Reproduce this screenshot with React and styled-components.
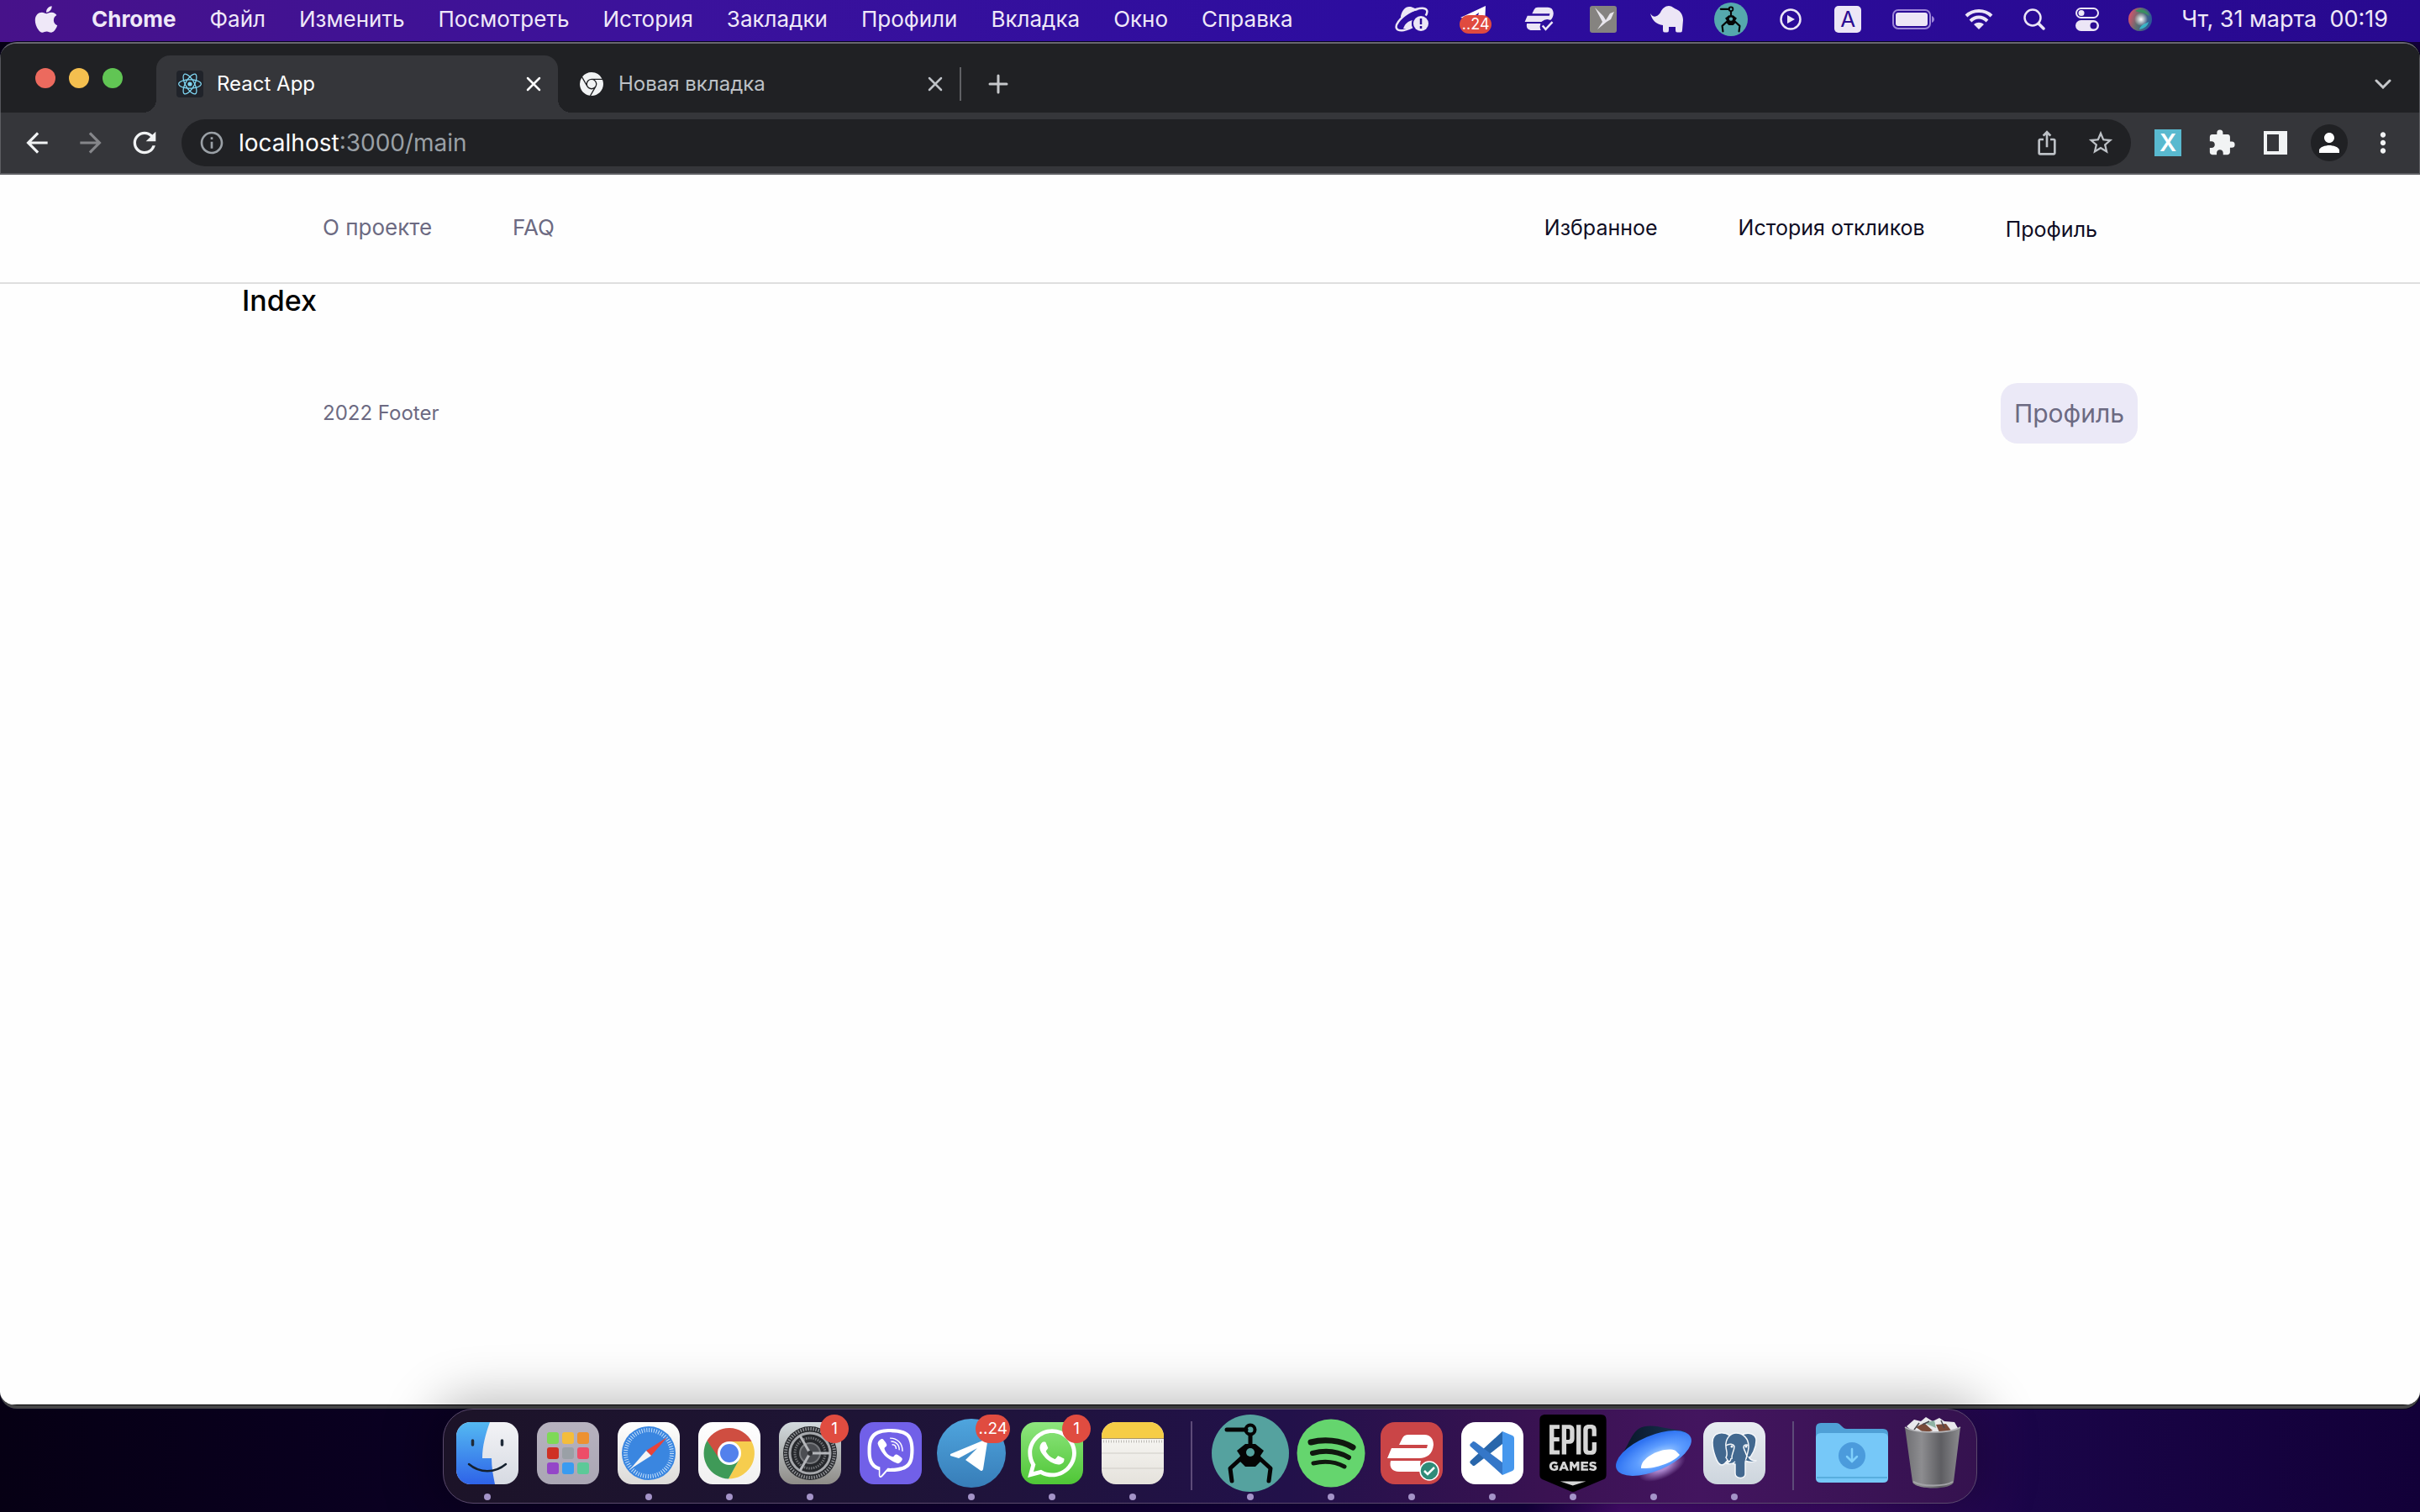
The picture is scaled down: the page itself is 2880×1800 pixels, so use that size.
import React from 'react'
import styled, { createGlobalStyle, css } from 'styled-components'
import { FaApple, FaWhatsapp } from 'react-icons/fa'
import { MdExtension, MdIosShare, MdStarBorder, MdInfoOutline, MdArrowBack, MdArrowForward, MdRefresh, MdPerson, MdMoreVert } from 'react-icons/md'
import { SiReact, SiGooglechrome, SiViber, SiEpicgames } from 'react-icons/si'

const GlobalStyle = createGlobalStyle`
    * {
        box-sizing: border-box;
        margin: 0;
        padding: 0;
    }
    body {
        font-family: Inter, 'Liberation Sans', sans-serif;
        background: #0b0024;
    }
    button {
        border: none;
        background: none;
        font: inherit;
        color: inherit;
        cursor: pointer;
    }
    a {
        color: inherit;
        text-decoration: none;
    }
    svg {
        display: block;
        flex: none;
    }
`

const Desktop = styled.div`
    min-height: 100vh;
    display: flex;
    flex-direction: column;
    background: linear-gradient(90deg, #060014 0%, #0b0024 20%, #120036 45%, #150040 63%, #480c72 67%, #3b0a66 76%, #1a0548 84%, #120038 100%);
`

const MenuBar = styled.header`
    height: 50px;
    padding: 0 38px 4px 41px;
    display: flex;
    align-items: center;
    justify-content: space-between;
    background: linear-gradient(90deg, #47128a 0%, #3b129c 28%, #2d0d9f 56%, #28098f 100%);
    color: #efe8f8;
    font-size: 26px;
    line-height: 32px;
`

const MenuList = styled.nav`
    display: flex;
    align-items: center;
    gap: 40px;
`

const MenuButton = styled.button`
    white-space: nowrap;
    font-weight: ${props => props.$bold ? 700 : 400};
`

const StatusList = styled.div`
    display: flex;
    align-items: center;
    gap: 36px;
`

const StatusButton = styled.button`
    width: ${props => props.$width}px;
    height: 44px;
    display: flex;
    align-items: center;
    justify-content: center;
`

const TelegramStatus = styled.span`
    position: relative;
    display: block;
`

const StatusCount = styled.span`
    position: absolute;
    left: 0;
    top: 13px;
    width: 38px;
    height: 22px;
    border-radius: 11px;
    background: #e04a3f;
    color: #fff;
    font-size: 18px;
    line-height: 22px;
    text-align: center;
`

const InputSource = styled.span`
    width: 32px;
    height: 32px;
    border-radius: 5px;
    background: #ece6f6;
    color: #2b0c92;
    font-size: 26px;
    line-height: 32px;
    text-align: center;
`

const Clock = styled.time`
    white-space: pre;
    font-size: 27px;
`

const Window = styled.main`
    flex: 1;
    display: flex;
    flex-direction: column;
    border-top: 2px solid #68676f;
    border-bottom: 4px solid #464648;
    border-radius: 20px;
    box-shadow: 0 0 0 1px #08041c;
    background: #202124;
    overflow: hidden;
`

const TabStrip = styled.div`
    height: 82px;
    padding: 0 11px 0 41px;
    display: flex;
    align-items: center;
    border: solid #55565b;
    border-width: 0 1px;
    background: #202124;
`

const Lights = styled.div`
    display: flex;
    gap: 16px;
    margin-right: 40px;
`

const Light = styled.button`
    width: 24px;
    height: 24px;
    border-radius: 50%;
    background: ${props => props.$color};
`

const Tab = styled.div`
    position: relative;
    align-self: flex-end;
    width: 478px;
    height: 68px;
    padding: 0 20px 0 24px;
    display: flex;
    align-items: center;
    gap: 16px;
    color: #bdc1c6;
    font-size: 24px;
    line-height: 32px;

    ${props => props.$active && css`
        background: #35363a;
        border-radius: 16px 16px 0 0;
        color: #fff;

        &::before,
        &::after {
            content: '';
            position: absolute;
            bottom: 0;
            width: 16px;
            height: 16px;
        }
        &::before {
            right: 100%;
            background: radial-gradient(circle at 0 0, transparent 16px, #35363a 16px);
        }
        &::after {
            left: 100%;
            background: radial-gradient(circle at 100% 0, transparent 16px, #35363a 16px);
        }
    `}
`

const Favicon = styled.span`
    width: 32px;
    height: 32px;
    border-radius: 4px;
    display: flex;
    align-items: center;
    justify-content: center;
    background: ${props => props.$dark ? '#20232a' : 'transparent'};
    color: ${props => props.$dark ? '#7fd6f2' : '#f1f3f4'};
`

const TabTitle = styled.span`
    flex: 1;
    white-space: nowrap;
`

const TabDivider = styled.span`
    width: 2px;
    height: 40px;
    margin-top: 14px;
    background: #606165;
`

const StripButton = styled.button`
    width: 64px;
    height: 56px;
    margin-top: 14px;
    margin-left: ${props => props.$last ? 'auto' : '12px'};
    display: flex;
    align-items: center;
    justify-content: center;
    color: #c6c8cb;
`

const Toolbar = styled.div`
    height: 74px;
    padding: 0 11px;
    display: flex;
    align-items: center;
    background: #35363a;
    border: solid #5d5e62;
    border-width: 0 1px 2px;
    color: #f1f3f4;
`

const ToolButton = styled.button`
    width: 64px;
    height: 56px;
    display: flex;
    align-items: center;
    justify-content: center;
    color: ${props => props.$color || '#f1f3f4'};
`

const Omnibox = styled.form`
    flex: 1;
    height: 56px;
    margin: 0 12px;
    padding: 0 4px 0 20px;
    display: flex;
    align-items: center;
    border-radius: 28px;
    background: #202124;
    color: #fff;
    font-size: 28px;
    line-height: 36px;

    label {
        margin-left: 16px;
    }
`

const UrlInput = styled.input`
    flex: 1;
    min-width: 0;
    border: none;
    outline: none;
    background: none;
    color: #9aa0a6;
    font: inherit;
`

const XBadge = styled.span`
    width: 32px;
    height: 32px;
    background: #59b9cf;
    color: #fff;
    font-size: 28px;
    line-height: 32px;
    font-weight: 600;
    text-align: center;
`

const Avatar = styled.span`
    width: 44px;
    height: 44px;
    border-radius: 50%;
    display: flex;
    align-items: center;
    justify-content: center;
    background: #202124;
    color: #fff;
`

const Page = styled.div`
    flex: 1;
    background: #fefefe;
    border-bottom: 1px solid #000;
`

const SiteHeader = styled.div`
    border-bottom: 2px solid #dedede;
`

const Container = styled.div`
    width: 80%;
    margin: 0 auto;
`

const HeaderRow = styled(Container)`
    height: 128px;
    padding: 0 96px 2px;
    display: flex;
    align-items: center;
    justify-content: space-between;
`

const SiteNav = styled.nav`
    display: flex;
    align-items: center;
    gap: 96px;
    font-size: ${props => props.$muted ? '26px' : '25px'};
    line-height: 32px;
    color: ${props => props.$muted ? '#6c6a82' : '#0f0d24'};
`

const ProfileButton = styled.button`
    padding-top: 4px;
`

const Title = styled.h1`
    font-size: 34px;
    line-height: 40px;
    font-weight: 500;
    color: #000;
`

const FooterRow = styled(Container)`
    padding: 78px 48px 0 96px;
    display: flex;
    align-items: center;
    justify-content: space-between;
    color: #6c6a82;
    font-size: 24px;
    line-height: 32px;
`

const FooterButton = styled.button`
    padding: 16px;
    border-radius: 20px;
    background: #ebe9f7;
    color: #6c6a82;
    font-size: 30px;
    line-height: 40px;
`

const DockArea = styled.footer`
    height: 123px;
    display: flex;
    justify-content: center;
    align-items: flex-start;
`

const Dock = styled.div`
    height: 113px;
    padding: 0 4px;
    display: flex;
    align-items: flex-start;
    border: 1px solid #5a4a6c;
    border-radius: 36px;
    background: linear-gradient(90deg, #1c1328 0%, #1e1436 28%, #22114a 55%, #3a1252 72%, #43155f 82%, #35124f 100%);
    box-shadow: 0 0 60px 14px rgba(0, 0, 0, 0.26);
`

const DockItem = styled.button`
    position: relative;
    width: 96px;
    height: 111px;
    padding-top: 4px;
    display: flex;
    flex-direction: column;
    align-items: center;
`

const DockIcon = styled.span`
    height: 96px;
    display: flex;
    align-items: center;
    justify-content: center;
`

const RunningDot = styled.span`
    width: 8px;
    height: 8px;
    border-radius: 50%;
    background: #a493c8;
`

const Badge = styled.span`
    position: absolute;
    top: 6px;
    right: 2px;
    min-width: 34px;
    height: 34px;
    padding: 0 3px;
    border-radius: 17px;
    background: #e04c40;
    color: #fff;
    font-size: 19px;
    line-height: 34px;
    text-align: center;
`

const DockDivider = styled.span`
    width: 2px;
    height: 82px;
    margin: 14px 21px 0;
    background: #5d4b78;
`

const Tile = styled.span`
    width: 74px;
    height: 74px;
    border-radius: 17px;
    display: flex;
    align-items: center;
    justify-content: center;
    overflow: hidden;
    color: #fff;
    background: ${props => props.$fill};
`

// menu bar icons

function AppleIcon() {
    return (
        <svg width="28" height="34" viewBox="0 0 28 34">
            <FaApple x="-4" y="-1" size="36" />
        </svg>
    )
}

function DiskIcon() {
    return (
        <svg width="40" height="32" viewBox="0 0 40 32" fill="none">
            <path d="M7 12 C9 5 12 1 17 1 C21 1 23 3 28 5 C20 6 13 9 7 14 Z" fill="#ece6f6" />
            <ellipse cx="20" cy="16" rx="21" ry="8.500" stroke="#ece6f6" strokeWidth="2.500" transform="rotate(-32 20 16)" />
            <path d="M10 27 C12 21 16 18 21 17 L20 27 Z" fill="#ece6f6" />
            <circle cx="31" cy="21" r="11" fill="#2d0d9f" />
            <circle cx="31" cy="21" r="9" fill="#ece6f6" />
            <path d="M31 15v7M31 24v3" stroke="#2b0c92" strokeWidth="2.500" />
        </svg>
    )
}

function PlaneIcon() {
    return (
        <svg width="38" height="36" viewBox="0 0 38 36">
            <path d="M1 16 L31 2 L30 26 L20 22 L23 10 L12 18 Z" fill="#fff" />
        </svg>
    )
}

function VpnShape({ color }) {
    return (
        <g fill={color}>
            <path d="M22 27 L26 19 Q28 15 33 15 H52 C60 15 63 21 63 27 C62 38 55 43 46 43 H18 V43 H14 V43 H8 L13 31 H55 L56 27 Z" />
            <path d="M12 46 H48 C46 51 48 56 51 59 H22 C14 59 10 54 12 46 Z" />
        </g>
    )
}

function VpnStatusIcon() {
    return (
        <svg width="36" height="30" viewBox="7 14 58 48">
            <VpnShape color="#ece6f6" />
            <circle cx="51" cy="52" r="14" fill="#2c0c9c" />
            <path d="M42 50 l6 7 l13 -14" fill="none" stroke="#ece6f6" strokeWidth="4" />
        </svg>
    )
}

function BirdIcon() {
    return (
        <svg width="32" height="32" viewBox="0 0 32 32">
            <rect width="32" height="32" rx="3" fill="#858380" />
            <path d="M6 2 L16 12 L19 17 L24 9 L29 7 L25 16 L20 19 L9 28 L15 19 Z" fill="#e8e6ec" />
        </svg>
    )
}

function ElephantIcon() {
    return (
        <svg width="40" height="32" viewBox="0 0 40 32">
            <path d="M0 9 C3 14 8 14 12 8 C14 3 18 0 22 0 C26 0 28 3 31 4 C36 6 39 11 39 17 L38 29 Q38 31.500 36 31.500 H32 Q30 31.500 30 29 V25 H22 V29 Q22 31.500 20 31.500 H17 Q15 31.500 15 29 V23 C7 22 2 17 0 9 Z" fill="#ece6f6" />
        </svg>
    )
}

function ClawIcon({ size, fill }) {
    return (
        <svg width={size} height={size} viewBox="0 0 92 92">
            <circle cx="46" cy="46" r="46" fill={fill} />
            <g fill="none" stroke="#050505" strokeLinecap="round" strokeLinejoin="round">
                <path d="M18 18 H41" strokeWidth="5" />
                <circle cx="46" cy="18" r="5.500" strokeWidth="4" />
                <path d="M46 25 V36" strokeWidth="5" />
                <path d="M34 53 L22 64 L24 79 M58 53 L70 64 L68 79" strokeWidth="5" />
            </g>
            <path d="M40 35 H52 L62 43 L58 49 L60 54 L52 62 H40 L32 54 L34 49 L30 43 Z" fill="#050505" />
            <circle cx="46" cy="45" r="5" fill={fill} />
        </svg>
    )
}

function PlayIcon() {
    return (
        <svg width="26" height="26" viewBox="0 0 26 26">
            <circle cx="13" cy="13" r="11.500" fill="none" stroke="#ece6f6" strokeWidth="2.500" />
            <path d="M9 8 L18 13 L9 18 Z" fill="#ece6f6" />
        </svg>
    )
}

function BatteryIcon() {
    return (
        <svg width="50" height="24" viewBox="0 0 50 24">
            <rect x="1" y="1" width="44" height="22" rx="6" fill="none" stroke="#9d86d8" strokeWidth="2" />
            <rect x="4" y="4" width="38" height="16" rx="3" fill="#ece6f6" />
            <path d="M47 8 C51 10 51 14 47 16 Z" fill="#9d86d8" />
        </svg>
    )
}

function WifiIcon() {
    return (
        <svg width="34" height="26" viewBox="0 0 34 26" fill="none" stroke="#ece6f6" strokeWidth="4">
            <path d="M2 9 C10 1 24 1 32 9" />
            <path d="M7 15 C13 9 21 9 27 15" />
            <path d="M17 25 L11 19 C15 16 19 16 23 19 Z" fill="#ece6f6" stroke="none" />
        </svg>
    )
}

function SearchIcon() {
    return (
        <svg width="26" height="26" viewBox="0 0 26 26" fill="none" stroke="#ece6f6" strokeLinecap="round">
            <circle cx="11" cy="11" r="9.500" strokeWidth="2.500" />
            <path d="M18 18 L24 24" strokeWidth="3.500" />
        </svg>
    )
}

function ControlIcon() {
    return (
        <svg width="28" height="28" viewBox="0 0 28 28">
            <rect x="1" y="1" width="26" height="11" rx="5.500" fill="none" stroke="#ece6f6" strokeWidth="2" />
            <circle cx="7" cy="6.500" r="3.500" fill="#ece6f6" />
            <rect y="15" width="28" height="13" rx="6.500" fill="#ece6f6" />
            <circle cx="21.500" cy="21.500" r="4" fill="#2b0c92" />
        </svg>
    )
}

function SiriIcon() {
    return (
        <svg width="28" height="28" viewBox="0 0 28 28">
            <defs>
                <linearGradient id="siri" x1="0" y1="0.300" x2="1" y2="0.600">
                    <stop offset="0" stopColor="#e0506a" />
                    <stop offset="0.450" stopColor="#5d6f70" />
                    <stop offset="1" stopColor="#27569a" />
                </linearGradient>
                <radialGradient id="siriGlow">
                    <stop offset="0" stopColor="#fff" />
                    <stop offset="1" stopColor="#fff" stopOpacity="0" />
                </radialGradient>
            </defs>
            <circle cx="14" cy="14" r="14" fill="url(#siri)" />
            <path d="M8 4 C14 0 23 3 25 10 C20 6 14 6 8 4 Z" fill="#3a8f62" />
            <path d="M13 26 C19 25 23 22 24 17 C19 20 15 20 13 26 Z" fill="#37b3c4" />
            <circle cx="15" cy="14" r="8" fill="url(#siriGlow)" />
        </svg>
    )
}

// browser icons

function CloseIcon() {
    return (
        <svg width="18" height="18" viewBox="0 0 18 18" stroke="currentColor" strokeWidth="2.500" strokeLinecap="round">
            <path d="M2 2 L16 16 M16 2 L2 16" />
        </svg>
    )
}

function PlusIcon() {
    return (
        <svg width="24" height="24" viewBox="0 0 24 24" stroke="currentColor" strokeWidth="3" strokeLinecap="round">
            <path d="M12 2 V22 M2 12 H22" />
        </svg>
    )
}

function ChevronIcon() {
    return (
        <svg width="20" height="12" viewBox="0 0 20 12" fill="none" stroke="currentColor" strokeWidth="3" strokeLinecap="round">
            <path d="M2 2 L10 10 L18 2" />
        </svg>
    )
}

function SidePanelIcon() {
    return (
        <svg width="28" height="28" viewBox="0 0 28 28">
            <path d="M0 0 H28 V28 H0 Z M4 4 V24 H18 V4 Z" fill="#f1f3f4" fillRule="evenodd" />
        </svg>
    )
}

// dock icons

function FinderIcon() {
    return (
        <Tile $fill="linear-gradient(#f3f3f6, #d6dae2)">
            <svg width="74" height="74" viewBox="0 0 74 74">
                <defs>
                    <linearGradient id="finder" x1="0" y1="0" x2="0" y2="1">
                        <stop offset="0" stopColor="#54b9f2" />
                        <stop offset="1" stopColor="#2e63e8" />
                    </linearGradient>
                </defs>
                <path d="M0 0 H40 C35 14 31 28 31 43 H42 C42 54 44 64 46 74 H0 Z" fill="url(#finder)" />
                <path d="M19.500 22 V27 M54.500 22 V27" stroke="#1f2a38" strokeWidth="3.500" strokeLinecap="round" />
                <path d="M15 50 C28 61 46 61 59 50" fill="none" stroke="#14202e" strokeWidth="2.500" strokeLinecap="round" />
            </svg>
        </Tile>
    )
}

const padColors = ['#7ed957', '#f4bd3c', '#ed9130', '#cf3024', '#9aa0a6', '#ee4d68', '#9446c8', '#3a9bf0', '#5cc998']

function LaunchpadIcon() {
    return (
        <Tile $fill="linear-gradient(#b7b2bf, #aaa6b4)">
            <svg width="74" height="74" viewBox="0 0 74 74">
                {padColors.map((color, i) => (
                    <rect key={color} x={12 + (i % 3) * 18} y={12 + Math.floor(i / 3) * 18} width="14" height="14" rx="3" fill={color} />
                ))}
            </svg>
        </Tile>
    )
}

function SafariIcon() {
    return (
        <Tile $fill="linear-gradient(#ffffff, #dcdad8)">
            <svg width="74" height="74" viewBox="0 0 74 74">
                <circle cx="37" cy="37" r="32" fill="#3a86e0" />
                <circle cx="37" cy="37" r="27.500" fill="none" stroke="#c9e2fb" strokeWidth="5" strokeDasharray="1 1.880" />
                <path d="M59 18 L34 34 L40 40 Z" fill="#e8433a" />
                <path d="M15 56 L34 34 L40 40 Z" fill="#f4f4f4" />
            </svg>
        </Tile>
    )
}

function ChromeIcon() {
    return (
        <Tile $fill="linear-gradient(#ffffff, #f0f0f0)">
            <svg width="74" height="74" viewBox="0 0 74 74">
                <path d="M10.500 22 A30.500 30.500 0 0 1 63.500 23 H37 L23 45 Z" fill="#cf4e41" />
                <path d="M63.500 23 A30.500 30.500 0 0 1 36 67.500 L49 44 L37 23 Z" fill="#f6cd4e" />
                <path d="M10.500 22 A30.500 30.500 0 0 0 36 67.500 L49 44 L26 45 Z" fill="#3f9a58" />
                <circle cx="37" cy="37" r="14" fill="#fff" />
                <circle cx="37" cy="37" r="11" fill="#5381ec" />
            </svg>
        </Tile>
    )
}

function SettingsIcon() {
    return (
        <Tile $fill="linear-gradient(#d3dade, #8e8c88)">
            <svg width="74" height="74" viewBox="0 0 74 74" fill="none">
                <circle cx="37" cy="37" r="32" fill="#26282c" />
                <circle cx="37" cy="37" r="29" stroke="#8f9195" strokeWidth="4" strokeDasharray="1.500 1.540" />
                <circle cx="37" cy="37" r="24" stroke="#a6a8ac" strokeWidth="3" />
                <circle cx="37" cy="37" r="18" stroke="#6f7175" strokeWidth="3" strokeDasharray="1.500 1.330" />
                <circle cx="37" cy="37" r="12" fill="#4b4d52" stroke="#77797d" strokeWidth="2" />
                <path d="M37 37 H61 M37 37 L25 16 M37 37 L25 58" stroke="#b4b6ba" strokeWidth="3" />
                <circle cx="37" cy="37" r="3" fill="#303236" />
            </svg>
        </Tile>
    )
}

function TelegramIcon() {
    return (
        <svg width="82" height="82" viewBox="0 0 82 82">
            <defs>
                <linearGradient id="telegram" x1="0" y1="0" x2="0" y2="1">
                    <stop offset="0" stopColor="#4fa5de" />
                    <stop offset="1" stopColor="#377db8" />
                </linearGradient>
            </defs>
            <circle cx="41" cy="41" r="41" fill="url(#telegram)" />
            <path d="M16 42 L57 25 C60 24 60 26 60 28 L55 60 C54 63 52 62 51 61 L34 49 L48 35 L26 47 L16 44 Z" fill="#fff" />
        </svg>
    )
}

function NotesIcon() {
    return (
        <Tile $fill="linear-gradient(#fbfbf8, #e5e2dc)">
            <svg width="74" height="74" viewBox="0 0 74 74">
                <rect width="74" height="19" fill="#f6cd46" />
                <path d="M0 19.500 H74" stroke="#a89568" />
                <path d="M2 23 H74" stroke="#bdbbb6" strokeWidth="3" strokeDasharray="1 2" />
                <path d="M0 37 H74 M0 55 H74" stroke="#cfccc7" />
            </svg>
        </Tile>
    )
}

function SpotifyIcon() {
    return (
        <svg width="82" height="82" viewBox="0 0 82 82">
            <circle cx="41" cy="41" r="40.500" fill="#65d56e" />
            <g fill="none" stroke="#10180f" strokeLinecap="round">
                <path d="M17 28 C32 24 52 25 67 34" strokeWidth="7" />
                <path d="M19 41 C34 37 48 38 62 46" strokeWidth="6" />
                <path d="M20 53 C33 50 46 51 57 57" strokeWidth="5" />
            </g>
        </svg>
    )
}

function ExpressIcon() {
    return (
        <Tile $fill="#ca4547">
            <svg width="74" height="74" viewBox="0 0 74 74">
                <VpnShape color="#fff" />
                <circle cx="58" cy="58" r="11" fill="#2f8b78" stroke="#fff" strokeWidth="1.500" />
                <path d="M52 58 L56 62 L64 54" fill="none" stroke="#fff" strokeWidth="2.500" />
            </svg>
        </Tile>
    )
}

function CodeIcon() {
    return (
        <Tile $fill="#fff">
            <svg width="74" height="74" viewBox="0 0 74 74">
                <path d="M49 11 L11 46 C10 47 10 49 12 50 L14 52 C15 52 16 52 17 51 L49 26 Z" fill="#2866ab" />
                <path d="M49 63 L11 29 C10 28 10 26 12 25 L14 23 C15 23 16 23 17 24 L49 48 Z" fill="#3577c8" />
                <path d="M49 11 L61 16 Q63 17 63 19 V55 Q63 57 61 58 L49 63 Z" fill="#4697ed" />
            </svg>
        </Tile>
    )
}

function EpicIcon() {
    return (
        <svg width="80" height="92" viewBox="0 0 80 92">
            <path d="M9 9 H71 V74 L40 88 L9 74 Z" fill="#d6d6d6" />
            <SiEpicgames x="-6" y="0" size="92" color="#000" />
        </svg>
    )
}

function UfoIcon() {
    return (
        <svg width="92" height="80" viewBox="0 0 92 80">
            <defs>
                <linearGradient id="dome" x1="0" y1="0" x2="1" y2="0">
                    <stop offset="0" stopColor="#071526" />
                    <stop offset="1" stopColor="#1a3554" />
                </linearGradient>
                <radialGradient id="disk" cx="0.550" cy="0.650" r="0.600">
                    <stop offset="0" stopColor="#b8ddff" />
                    <stop offset="0.500" stopColor="#5c9cff" />
                    <stop offset="1" stopColor="#2f73f2" />
                </radialGradient>
                <radialGradient id="beam">
                    <stop offset="0.300" stopColor="#d9b8ff" stopOpacity="0.700" />
                    <stop offset="1" stopColor="#d9b8ff" stopOpacity="0" />
                </radialGradient>
            </defs>
            <path d="M4 48 C12 40 18 18 28 11 C38 5 50 8 60 10 L84 14 L40 44 Z" fill="url(#dome)" />
            <ellipse cx="56" cy="56" rx="30" ry="14" fill="url(#beam)" transform="rotate(-25 56 56)" />
            <ellipse cx="46" cy="40" rx="48" ry="21" fill="url(#disk)" transform="rotate(-23 46 40)" />
            <path d="M31 58 C30 44 60 31 72 37 L77 42 C68 52 46 59 31 58 Z" fill="#fff" />
        </svg>
    )
}

function PostgresIcon() {
    return (
        <Tile $fill="linear-gradient(#e9edf2, #cdd5dd)">
            <svg width="74" height="74" viewBox="0 0 74 74">
                <g fill="#42688f" stroke="#f4f7fa" strokeWidth="1.500" strokeLinejoin="round">
                    <path d="M32 16 C24 11 11 11 11 24 C11 33 16 51 22 51 C25 51 28 47 30 44 Z" />
                    <path d="M46 15 C54 11 63 14 63 22 C63 31 58 40 53 45 L46 40 Z" />
                    <path d="M27 29 C26 19 33 13 39 13 C48 13 54 20 54 29 C54 36 51 41 50 48 V62 C50 68 38 68 38 61 V50 C34 50 29 47 27 42 C30 38 27 34 27 29 Z" />
                    <path d="M38 47 C35 50 30 50 27 49 C31 48 33 46 33 43 M50 46 C54 48 60 48 63 46 C58 46 55 44 54 41" />
                    <path d="M27 28 C31 25 36 26 37 29 C37 35 33 38 34 44 M54 28 C51 26 48 27 48 30 C49 35 52 38 52 42" fill="none" />
                </g>
                <circle cx="34" cy="29" r="1.500" fill="#fff" />
                <circle cx="51" cy="29" r="1.500" fill="#fff" />
            </svg>
        </Tile>
    )
}

function FolderIcon() {
    return (
        <svg width="86" height="72" viewBox="0 0 86 72">
            <path d="M6 0 H24 C30 0 31 7 37 7 H80 Q86 7 86 13 V40 H0 V6 Q0 0 6 0 Z" fill="#4fa0d6" />
            <path d="M6 12 H80 Q86 12 86 18 V66 Q86 71 80 71 H6 Q0 71 0 66 V18 Q0 12 6 12 Z" fill="#76c8f8" />
            <path d="M1 65 H85" stroke="#58aede" strokeWidth="2" />
            <circle cx="43" cy="39" r="16" fill="#4b9bdc" />
            <path d="M43 31 V46 M37 40 L43 46 L49 40" fill="none" stroke="#7fd0fb" strokeWidth="2.500" strokeLinecap="round" />
        </svg>
    )
}

function TrashIcon() {
    return (
        <svg width="68" height="88" viewBox="0 0 68 88">
            <defs>
                <linearGradient id="bin" x1="0" y1="0" x2="1" y2="0">
                    <stop offset="0" stopColor="#6f6f73" />
                    <stop offset="0.300" stopColor="#8d8d90" />
                    <stop offset="0.650" stopColor="#5e5e62" />
                    <stop offset="1" stopColor="#8b8b8e" />
                </linearGradient>
            </defs>
            <path d="M3 12 L12 4 L20 6 L26 1 L34 6 L42 2 L48 6 L60 7 L64 14 L56 20 H12 Z" fill="#e9e9ec" />
            <path d="M14 13 L24 8 L34 17 L24 20 Z M38 10 L50 9 L56 17 L42 19 Z" fill="#7a4a38" />
            <path d="M24 8 L36 5 L38 14 Z" fill="#8fb3a4" />
            <path d="M22 10 L30 6 M44 5 L48 14 M12 16 L18 8" stroke="#4a4a50" strokeWidth="1.500" />
            <path d="M1 13 C14 21 54 21 67 13 L59 78 C58 88 12 88 10 78 Z" fill="url(#bin)" />
            <path d="M1 13 C14 21 54 21 67 13" fill="none" stroke="#b4b4b8" strokeWidth="1.500" />
            <path d="M11 78 C22 84 48 84 58 78" fill="none" stroke="#a3a3a7" strokeWidth="2" />
        </svg>
    )
}

const menuItems = ['Файл', 'Изменить', 'Посмотреть', 'История', 'Закладки', 'Профили', 'Вкладка', 'Окно', 'Справка']

const statusItems = [
    { name: 'Диск', width: 40, icon: <DiskIcon /> },
    { name: 'Telegram', width: 40, icon: <TelegramStatus><PlaneIcon /><StatusCount>..24</StatusCount></TelegramStatus> },
    { name: 'VPN', width: 40, icon: <VpnStatusIcon /> },
    { name: 'Bird', width: 40, icon: <BirdIcon /> },
    { name: 'Elephant', width: 40, icon: <ElephantIcon /> },
    { name: 'Claw', width: 40, icon: <ClawIcon size={40} fill="#55a8ad" /> },
    { name: 'Play', width: 30, icon: <PlayIcon /> },
    { name: 'Раскладка', width: 34, icon: <InputSource>A</InputSource> },
    { name: 'Батарея', width: 50, icon: <BatteryIcon /> },
    { name: 'Wi-Fi', width: 34, icon: <WifiIcon /> },
    { name: 'Поиск', width: 26, icon: <SearchIcon /> },
    { name: 'Пункт управления', width: 28, icon: <ControlIcon /> },
    { name: 'Siri', width: 26, icon: <SiriIcon /> },
]

const dockGroups = [
    [
        { name: 'Finder', icon: <FinderIcon />, running: true },
        { name: 'Launchpad', icon: <LaunchpadIcon /> },
        { name: 'Safari', icon: <SafariIcon />, running: true },
        { name: 'Chrome', icon: <ChromeIcon />, running: true },
        { name: 'Настройки', icon: <SettingsIcon />, running: true, badge: '1' },
        { name: 'Viber', icon: <Tile $fill="#7160e8"><SiViber size={58} /></Tile> },
        { name: 'Telegram', icon: <TelegramIcon />, running: true, badge: '..24' },
        { name: 'WhatsApp', icon: <Tile $fill="linear-gradient(#8ee57e, #4fc636)"><FaWhatsapp size={66} /></Tile>, running: true, badge: '1' },
        { name: 'Заметки', icon: <NotesIcon />, running: true },
    ],
    [
        { name: 'Claw', icon: <ClawIcon size={92} fill="#55a29f" />, running: true },
        { name: 'Spotify', icon: <SpotifyIcon />, running: true },
        { name: 'ExpressVPN', icon: <ExpressIcon />, running: true },
        { name: 'VS Code', icon: <CodeIcon />, running: true },
        { name: 'Epic Games', icon: <EpicIcon />, running: true },
        { name: 'Диск', icon: <UfoIcon />, running: true },
        { name: 'PostgreSQL', icon: <PostgresIcon />, running: true },
    ],
    [
        { name: 'Загрузки', icon: <FolderIcon /> },
        { name: 'Корзина', icon: <TrashIcon /> },
    ],
]

function SystemBar() {
    return (
        <MenuBar>
            <MenuList>
                <MenuButton aria-label="Apple"><AppleIcon /></MenuButton>
                <MenuButton $bold>Chrome</MenuButton>
                {menuItems.map(item => <MenuButton key={item}>{item}</MenuButton>)}
            </MenuList>
            <StatusList>
                {statusItems.map(item => (
                    <StatusButton key={item.name} $width={item.width} aria-label={item.name}>{item.icon}</StatusButton>
                ))}
                <Clock>{'Чт, 31 марта  00:19'}</Clock>
            </StatusList>
        </MenuBar>
    )
}

function Tabs() {
    return (
        <TabStrip>
            <Lights>
                <Light $color="#ec6a5e" aria-label="Закрыть" />
                <Light $color="#f4bf4f" aria-label="Свернуть" />
                <Light $color="#61c554" aria-label="Развернуть" />
            </Lights>
            <Tab $active>
                <Favicon $dark><SiReact size={28} /></Favicon>
                <TabTitle>React App</TabTitle>
                <button aria-label="Закрыть вкладку"><CloseIcon /></button>
            </Tab>
            <Tab>
                <Favicon><SiGooglechrome size={28} /></Favicon>
                <TabTitle>Новая вкладка</TabTitle>
                <button aria-label="Закрыть вкладку"><CloseIcon /></button>
            </Tab>
            <TabDivider />
            <StripButton aria-label="Открыть вкладку"><PlusIcon /></StripButton>
            <StripButton $last aria-label="Поиск вкладок"><ChevronIcon /></StripButton>
        </TabStrip>
    )
}

function AddressBar() {
    return (
        <Toolbar>
            <ToolButton aria-label="Назад"><MdArrowBack size={38} /></ToolButton>
            <ToolButton aria-label="Вперёд" $color="#85868a"><MdArrowForward size={38} /></ToolButton>
            <ToolButton aria-label="Обновить"><MdRefresh size={40} /></ToolButton>
            <Omnibox>
                <MdInfoOutline size={32} color="#9aa0a6" />
                <label htmlFor="url">localhost</label>
                <UrlInput id="url" type="text" defaultValue=":3000/main" />
                <ToolButton type="button" aria-label="Поделиться" $color="#bdc1c6"><MdIosShare size={32} /></ToolButton>
                <ToolButton type="button" aria-label="В закладки" $color="#bdc1c6"><MdStarBorder size={34} /></ToolButton>
            </Omnibox>
            <ToolButton><XBadge>X</XBadge></ToolButton>
            <ToolButton aria-label="Расширения"><MdExtension size={34} /></ToolButton>
            <ToolButton aria-label="Боковая панель"><SidePanelIcon /></ToolButton>
            <ToolButton aria-label="Профиль Chrome"><Avatar><MdPerson size={36} /></Avatar></ToolButton>
            <ToolButton aria-label="Меню"><MdMoreVert size={38} /></ToolButton>
        </Toolbar>
    )
}

function MainPage() {
    return (
        <Page>
            <SiteHeader>
                <HeaderRow>
                    <SiteNav $muted>
                        <a href="#about">О проекте</a>
                        <a href="#faq">FAQ</a>
                    </SiteNav>
                    <SiteNav>
                        <a href="#favorites">Избранное</a>
                        <a href="#history">История откликов</a>
                        <ProfileButton>Профиль</ProfileButton>
                    </SiteNav>
                </HeaderRow>
            </SiteHeader>
            <Container>
                <Title>Index</Title>
            </Container>
            <FooterRow>
                <p>2022 Footer</p>
                <FooterButton>Профиль</FooterButton>
            </FooterRow>
        </Page>
    )
}

function AppDock() {
    return (
        <DockArea>
            <Dock>
                {dockGroups.map((group, i) => (
                    <React.Fragment key={i}>
                        {i > 0 && <DockDivider />}
                        {group.map(app => (
                            <DockItem key={app.name} aria-label={app.name}>
                                <DockIcon>{app.icon}</DockIcon>
                                {app.running && <RunningDot />}
                                {app.badge && <Badge>{app.badge}</Badge>}
                            </DockItem>
                        ))}
                    </React.Fragment>
                ))}
            </Dock>
        </DockArea>
    )
}

function App() {
    return (
        <Desktop>
            <GlobalStyle />
            <SystemBar />
            <Window>
                <Tabs />
                <AddressBar />
                <MainPage />
            </Window>
            <AppDock />
        </Desktop>
    )
}

export default App
